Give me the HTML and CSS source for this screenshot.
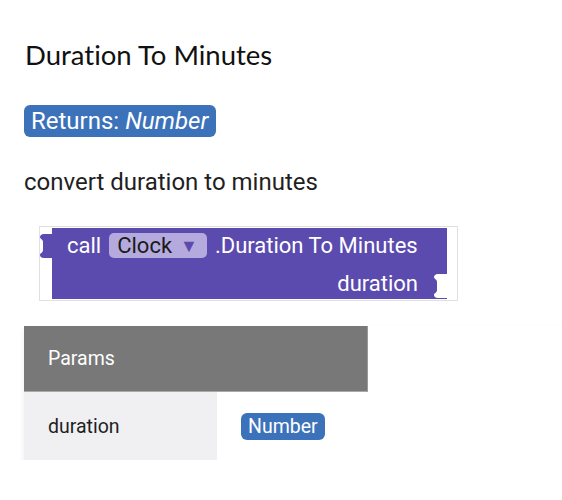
FILE: index.html
```html
<!DOCTYPE html>
<html>
<head>
<meta charset="utf-8">
<link rel="stylesheet" href="styles.css">
</head>
<body>
<main class="page">
  <h1 class="title">Duration To Minutes</h1>
  <div class="returns"><span class="badge badge-lg">Returns: <em>Number</em></span></div>
  <p class="desc">convert duration to minutes</p>

  <div class="block-frame">
    <div class="block">
      <svg class="notch-left" width="13" height="24" viewBox="0 0 13 24">
        <path d="M13 0 H4 C1 0 0 2 0 3 C0 5 3 5 3 8 V16 C3 19 0 19 0 21 C0 22 1 24 4 24 H13 Z" fill="#5b4bae"/>
      </svg>
      <div class="block-row">
        <span>call</span>
        <span class="dropdown">Clock <span class="arrow">▼</span></span>
        <span>.Duration To Minutes</span>
      </div>
      <div class="block-row block-row-end">
        <span>duration</span>
      </div>
      <svg class="notch-right" width="13" height="24" viewBox="0 0 13 24">
        <path d="M13 0 H4 C1 0 0 2 0 3 C0 5 3 5 3 8 V16 C3 19 0 19 0 21 C0 22 1 24 4 24 H13 Z" fill="#ffffff"/>
      </svg>
    </div>
  </div>

  <div class="params">
    <div class="params-head">Params</div>
    <div class="params-row">
      <div class="cell-name">duration</div>
      <div class="cell-type"><span class="badge badge-sm">Number</span></div>
    </div>
  </div>
</main>
</body>
</html>
```

FILE: styles.css
```css
html, body {
  margin: 0;
  padding: 0;
  background: #ffffff;
}
body {
  font-family: Roboto, "Liberation Sans", sans-serif;
  color: #1f1f1f;
  overflow: hidden;
}
.page {
  padding: 37px 0 0 24px;
}
.title {
  margin: 0;
  font-family: Lato, "Open Sans", sans-serif;
  font-variant-ligatures: none;
  font-weight: 400;
  font-size: 27.5px;
  line-height: 36px;
  color: #111;
  padding-left: 1px;
}
.returns {
  margin-top: 32px;
  line-height: 0;
}
.badge {
  display: inline-block;
  background: #3c72ba;
  color: #fff;
  border-radius: 6px;
}
.badge-lg {
  font-size: 24px;
  line-height: 32px;
  height: 32px;
  padding: 0 8px 0 7px;
}
.badge-lg em {
  font-style: italic;
}
.badge-sm {
  font-size: 19.5px;
  line-height: 27px;
  height: 27px;
  padding: 0 7px;
}
.desc {
  margin: 31px 0 0 0;
  font-size: 24px;
  line-height: 28px;
  color: #1f1f1f;
}
.block-frame {
  margin: 30px 0 0 15px;
  border: 1px solid #e0e0e0;
  padding: 1px 10px 1px 12px;
  box-sizing: border-box;
  width: 419px;
  height: 75px;
}
.block {
  position: relative;
  background: #5b4bae;
  height: 71px;
  color: #fff;
  font-size: 22px;
  display: flex;
  flex-direction: column;
  padding: 4px 29px 0 15px;
  box-sizing: border-box;
}
.block-row {
  display: flex;
  align-items: center;
  gap: 8px;
  height: 27px;
  white-space: nowrap;
}
.block-row-end {
  justify-content: flex-end;
  margin-top: 11px;
}
.dropdown {
  background: #b4aadd;
  color: #1a1a1a;
  border-radius: 5px;
  height: 25px;
  line-height: 25px;
  padding: 0 9px 0 8px;
  display: inline-flex;
  align-items: center;
  gap: 8px;
}
.arrow {
  color: #5b4bae;
  font-size: 18px;
}
.notch-left {
  position: absolute;
  left: -12px;
  top: 6px;
}
.notch-right {
  position: absolute;
  right: 0;
  top: 46px;
}
.params {
  margin-top: 25px;
  width: 538px;
  box-shadow: 0 3px 6px rgba(0, 0, 0, 0.08);
}
.params-head {
  width: 344px;
  height: 66px;
  box-sizing: border-box;
  background: #787878;
  border-right: 1px solid #9a9a9a;
  border-bottom: 1px solid #a8a8a8;
  color: #fff;
  font-size: 19.5px;
  padding-left: 24px;
  display: flex;
  align-items: center;
}
.params-row {
  display: flex;
  height: 68px;
}
.cell-name {
  width: 193px;
  background: #f0f0f2;
  font-size: 19.5px;
  padding-left: 24px;
  box-sizing: border-box;
  display: flex;
  align-items: center;
  color: #1f1f1f;
}
.cell-type {
  flex: 1;
  padding-left: 24px;
  display: flex;
  align-items: center;
  background: #fff;
}
```
